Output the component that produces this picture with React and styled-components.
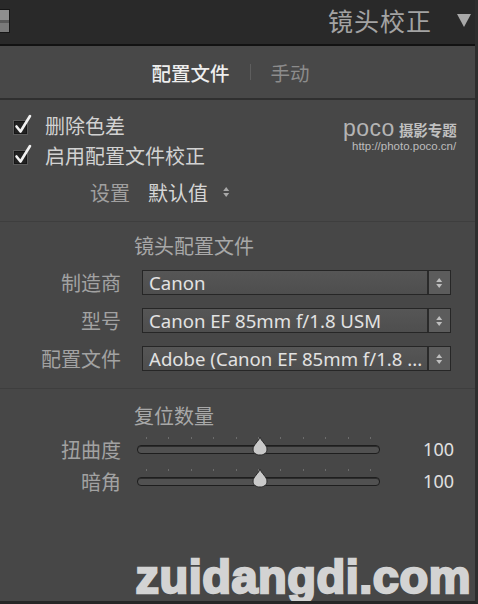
import React from "react";
import styled, { createGlobalStyle } from "styled-components";

const Global = createGlobalStyle`
  html, body {
    margin: 0;
    padding: 0;
    background: #474747;
  }
  body {
    font-family: "Noto Sans CJK SC", "Noto Sans", sans-serif;
  }
`;

const Panel = styled("div")`
  width: 478px;
  height: 604px;
  box-sizing: border-box;
  background: #474747;
  border-right: 3px solid #2e2e2e;
  border-bottom: 3px solid #262626;
  display: flex;
  flex-direction: column;
  overflow: hidden;
`;

const Header = styled("div")`
  height: 44px;
  flex: none;
  background: #292929;
  border-bottom: 2px solid #121212;
  display: flex;
  align-items: center;
  padding-right: 4px;
`;

const PanelIcon = styled("div")`
  width: 10px;
  height: 24px;
  margin-top: -3px;
  box-sizing: border-box;
  border: 1px solid #161616;
  border-left: none;
  background: linear-gradient(#8e8e8e 0 45%, #5a5a5a 45% 58%, #7a7a7a 58%);
`;

const Title = styled("div")`
  margin-left: auto;
  color: #a3a3a3;
  font-size: 25px;
  letter-spacing: 1px;
  line-height: 1;
  margin-top: -3px;
`;

const Triangle = styled("div")`
  width: 0;
  height: 0;
  margin-left: 25px;
  margin-top: -3px;
  border-left: 7px solid transparent;
  border-right: 7px solid transparent;
  border-top: 13px solid #a8a8a8;
`;

const Tabs = styled("div")`
  height: 52px;
  flex: none;
  background: #484848;
  border-bottom: 2px solid #2f2f2f;
  display: flex;
  align-items: center;
  justify-content: center;
  gap: 20px;
  padding-right: 14px;
  font-size: 19.5px;
`;

const Tab = styled("span")`
  color: ${(p) => (p.$active ? "#eeeeee" : "#8c8c8c")};
  font-weight: ${(p) => (p.$active ? 500 : 400)};
`;

const TabSep = styled("span")`
  width: 1px;
  height: 16px;
  background: #5e5e5e;
`;

const Section = styled("div")`
  position: relative;
  display: flex;
  flex-direction: column;
  border-bottom: ${(p) => (p.$line ? "1px solid #3e3e3e" : "none")};
  padding: ${(p) => p.$pad};
`;

const CheckRow = styled("label")`
  display: flex;
  align-items: center;
  gap: 11px;
  height: 30px;
  padding-left: 12px;
  color: #d2d2d2;
  font-size: 20px;
`;

const SettingRow = styled("div")`
  display: flex;
  align-items: center;
  height: 30px;
  margin-top: 7px;
  padding-left: 90px;
  font-size: 20px;
`;

const SettingLabel = styled("span")`
  color: #a0a0a0;
  margin-right: 18px;
`;

const SettingValue = styled("span")`
  color: #d6d6d6;
  margin-right: 14px;
`;

const Logo = styled("div")`
  position: absolute;
  top: 17px;
  left: 343px;
  display: flex;
  flex-direction: column;
  color: #b4b4b4;
`;

const LogoTop = styled("div")`
  display: flex;
  align-items: baseline;
  gap: 4px;
  line-height: 1;
`;

const LogoWord = styled("span")`
  font-family: "Liberation Sans", sans-serif;
  font-size: 23px;
  letter-spacing: 0.5px;
`;

const LogoCn = styled("span")`
  font-size: 14.5px;
  font-weight: 700;
  color: #c0c0c0;
`;

const LogoUrl = styled("span")`
  font-family: "Liberation Sans", sans-serif;
  font-size: 11.5px;
  margin-left: 9px;
  color: #bdbdbd;
`;

const GroupTitle = styled("div")`
  padding-left: 134px;
  color: #a8a8a8;
  font-size: 20px;
  height: 28px;
  line-height: 28px;
`;

const FieldGrid = styled("div")`
  display: grid;
  grid-template-columns: 121px 309px;
  column-gap: 21px;
  row-gap: 13px;
  align-items: center;
  margin-top: 10px;
`;

const FieldLabel = styled("div")`
  text-align: right;
  color: #a2a2a2;
  font-size: 20px;
  line-height: 25px;
`;

const Select = styled("div")`
  height: 25px;
  box-sizing: border-box;
  display: flex;
  background: #2a2a2a;
  border: 1px solid #262626;
  gap: 2px;
`;

const SelectText = styled("div")`
  flex: 1;
  min-width: 0;
  background: linear-gradient(#565656, #4e4e4e);
  color: #e2e2e2;
  font-family: "Noto Sans", sans-serif;
  font-size: 18.6px;
  line-height: 23px;
  padding-left: 6px;
  white-space: nowrap;
  overflow: hidden;
`;

const SelectButton = styled("div")`
  width: 21px;
  background: #5c5c5c;
  display: flex;
  align-items: center;
  justify-content: center;
`;

const SliderList = styled("div")`
  display: flex;
  flex-direction: column;
  margin-top: 3px;
`;

const SliderRow = styled("div")`
  display: grid;
  grid-template-columns: 121px 243px 58px;
  column-gap: 16px;
  align-items: center;
  height: 32px;
`;

const Track = styled("div")`
  position: relative;
  height: 7px;
  border-radius: 4px;
  border: 1px solid #1e1e1e;
  background: #515151;
  box-shadow: inset 0 1px 0 #2c2c2c;
`;

const Ticks = styled("div")`
  position: absolute;
  left: 8px;
  right: 8px;
  top: -9px;
  display: flex;
  justify-content: space-between;
`;

const Tick = styled("span")`
  width: 1px;
  height: 2px;
  background: #6c6c6c;
`;

const Thumb = styled("svg")`
  position: absolute;
  top: -10px;
  margin-left: -8px;
`;

const SliderValue = styled("div")`
  text-align: right;
  color: #e0e0e0;
  font-family: "Noto Sans", sans-serif;
  font-size: 18px;
`;

const Watermark = styled("div")`
  margin-top: auto;
  margin-bottom: -2px;
  text-align: right;
  padding-right: 4px;
  font-family: "Liberation Sans", sans-serif;
  font-weight: 700;
  font-size: 47px;
  line-height: 52px;
  color: #d3d3d3;
  -webkit-text-stroke: 2.4px #d3d3d3;
  letter-spacing: 0.5px;
`;

const CheckBox = () => (
  <svg width="22" height="22" viewBox="0 0 22 22">
    <rect x="1.5" y="6.5" width="14" height="14" fill="#161616" stroke="#5a5a5a" />
    <rect x="3" y="8" width="11" height="11" fill="#222" />
    <path d="M4.5 12.5 L8.5 17.5 L18 2" fill="none" stroke="#f2f2f2" strokeWidth="2.6" strokeLinecap="round" strokeLinejoin="round" />
  </svg>
);

const Updown = ({ color = "#bdbdbd", size = 12 }) => (
  <svg width={size * 0.7} height={size} viewBox="0 0 7 12">
    <path d="M0.5 5 L3.5 1 L6.5 5 Z" fill={color} />
    <path d="M0.5 7 L3.5 11 L6.5 7 Z" fill={color} />
  </svg>
);

const Slider = ({ label, value, pos }) => (
  <SliderRow>
    <FieldLabel>{label}</FieldLabel>
    <Track>
      <Ticks>
        {Array.from({ length: 11 }).map((_, i) => (
          <Tick key={i} />
        ))}
      </Ticks>
      <Thumb width="16" height="20" viewBox="0 0 16 20" style={{ left: `${pos}%` }}>
        <path d="M8 1 C9 5 15 9 15 13 C15 17 12 19 8 19 C4 19 1 17 1 13 C1 9 7 5 8 1 Z" fill="#c9c9c9" stroke="#2a2a2a" strokeWidth="1" />
      </Thumb>
    </Track>
    <SliderValue>{value}</SliderValue>
  </SliderRow>
);

const fields = [
  { label: "制造商", value: "Canon" },
  { label: "型号", value: "Canon EF 85mm f/1.8 USM" },
  { label: "配置文件", value: "Adobe (Canon EF 85mm f/1.8 ..." },
];

export default function App() {
  return (
    <>
      <Global />
      <Panel>
        <Header>
          <PanelIcon />
          <Title>镜头校正</Title>
          <Triangle />
        </Header>
        <Tabs>
          <Tab $active>配置文件</Tab>
          <TabSep />
          <Tab>手动</Tab>
        </Tabs>
        <Section $line $pad="10px 0 14px">
          <CheckRow>
            <CheckBox />
            删除色差
          </CheckRow>
          <CheckRow>
            <CheckBox />
            启用配置文件校正
          </CheckRow>
          <SettingRow>
            <SettingLabel>设置</SettingLabel>
            <SettingValue>默认值</SettingValue>
            <Updown color="#a8a8a8" />
          </SettingRow>
          <Logo>
            <LogoTop>
              <LogoWord>poco</LogoWord>
              <LogoCn>摄影专题</LogoCn>
            </LogoTop>
            <LogoUrl>http://photo.poco.cn/</LogoUrl>
          </Logo>
        </Section>
        <Section $line $pad="10px 0 17px">
          <GroupTitle>镜头配置文件</GroupTitle>
          <FieldGrid>
            {fields.map((f) => (
              <React.Fragment key={f.label}>
                <FieldLabel>{f.label}</FieldLabel>
                <Select>
                  <SelectText>{f.value}</SelectText>
                  <SelectButton>
                    <Updown color="#bebebe" size={12} />
                  </SelectButton>
                </Select>
              </React.Fragment>
            ))}
          </FieldGrid>
        </Section>
        <Section $pad="13px 0 0">
          <GroupTitle>复位数量</GroupTitle>
          <SliderList>
            <Slider label="扭曲度" value="100" pos={50.5} />
            <Slider label="暗角" value="100" pos={50.5} />
          </SliderList>
        </Section>
        <Watermark>zuidangdi.com</Watermark>
      </Panel>
    </>
  );
}
